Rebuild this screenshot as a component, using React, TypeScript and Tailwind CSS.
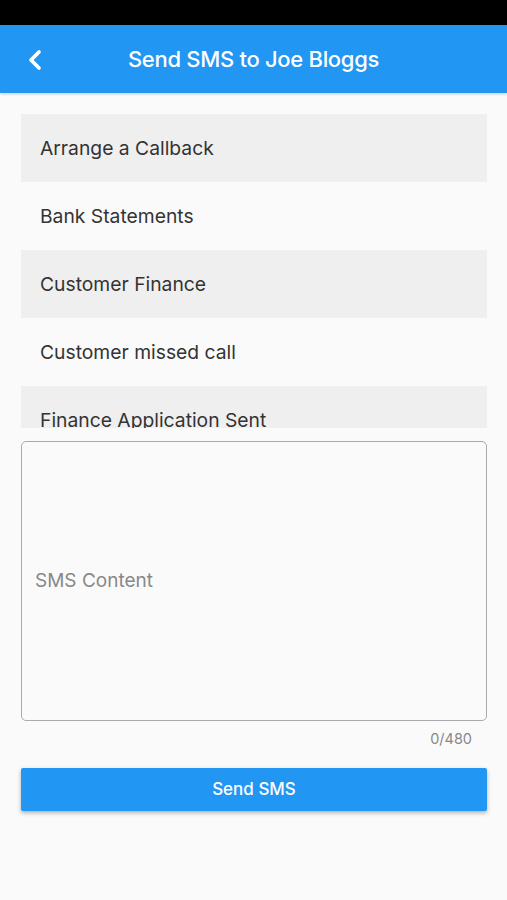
import { ChevronLeft } from 'lucide-react';

const templates = [
    'Arrange a Callback',
    'Bank Statements',
    'Customer Finance',
    'Customer missed call',
    'Finance Application Sent',
];

export default function App() {
    return (
        <div className="w-[507px] h-[900px] bg-[#fafafa] flex flex-col" style={{ fontFamily: 'Inter, "Noto Sans", sans-serif' }}>
            <div className="h-[25px] bg-black" />
            <header className="h-[68px] bg-[#2196f3] flex items-center relative shadow-[0_1px_3px_rgba(0,0,0,0.2)]">
                <button className="absolute left-[19px] top-[19px] text-white">
                    <ChevronLeft size={32} strokeWidth={2.8} />
                </button>
                <h1 className="flex-1 text-center text-white text-[22px] font-medium tracking-[-0.3px]">Send SMS to Joe Bloggs</h1>
            </header>

            <div className="pl-[21px] pr-[20px] pt-[21px] flex flex-col">
                <ul className="h-[314px] overflow-hidden">
                    {templates.map((t, i) => (
                        <li key={t} className={`h-[68px] flex items-center pl-[19px] text-[19.3px] text-[#333] ${i % 2 === 0 ? 'bg-[#efefef]' : ''}`}>
                            {t}
                        </li>
                    ))}
                </ul>

                <div className="mt-[13px] h-[280px] border-[1.5px] border-[#aaa] rounded-[5px] flex items-center px-[13px]">
                    <span className="text-[19px] text-[#888]">SMS Content</span>
                </div>
                <div className="text-right pr-[15px] mt-[7px] text-[14.5px] text-[#888]">0/480</div>

                <button className="mt-[18px] h-[43px] bg-[#2196f3] text-white text-[17px] font-medium rounded-[2px] shadow-[0_2px_4px_rgba(0,0,0,0.3)]">
                    Send SMS
                </button>
            </div>
        </div>
    );
}
